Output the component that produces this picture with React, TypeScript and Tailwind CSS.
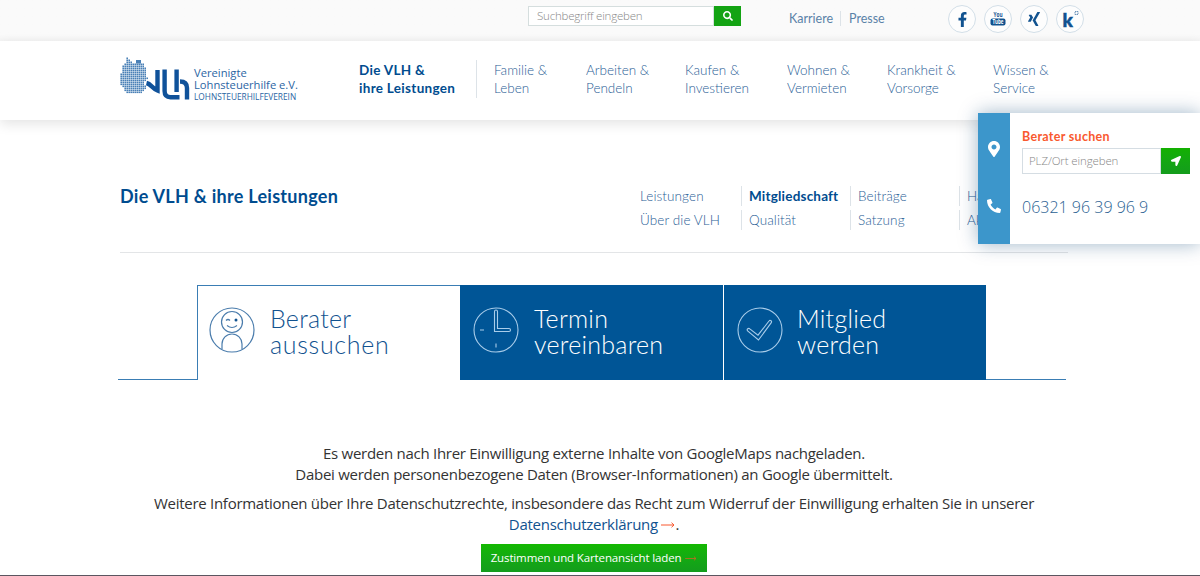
import { FaFacebookF, FaLocationArrow, FaMapMarkerAlt, FaPhone, FaSearch, FaXing } from "react-icons/fa";

const mainNav = [
  { lines: ["Familie &", "Leben"], width: "w-[92px]" },
  { lines: ["Arbeiten &", "Pendeln"], width: "w-[99px]" },
  { lines: ["Kaufen &", "Investieren"], width: "w-[102px]" },
  { lines: ["Wohnen &", "Vermieten"], width: "w-[100px]" },
  { lines: ["Krankheit &", "Vorsorge"], width: "w-[106px]" },
  { lines: ["Wissen &", "Service"], width: "w-[80px]" },
];

const subNav = [
  ["Leistungen", "Über die VLH"],
  ["Mitgliedschaft", "Qualität"],
  ["Beiträge", "Satzung"],
  ["Häufige Fragen", "Aktuelles"],
];

// dotted map: first and last column of every row
const mapRows = [
  [3, 3], [3, 4], [3, 5], [2, 11], [1, 11], [1, 12], [1, 12], [1, 12], [0, 12],
  [0, 12], [0, 13], [0, 12], [0, 11], [0, 11], [1, 12], [2, 12], [2, 11], [3, 10],
];

function Logo() {
  return (
    <div className="flex w-[239px] shrink-0">
      <svg width="72" height="46" viewBox="0 0 72 46" className="shrink-0">
        <g fill="#4a80b6">
          <rect x="16" y="3" width="5" height="3.5" />
          {mapRows.map(([from, to], row) =>
            Array.from({ length: to - from + 1 }, (_, i) => (
              <rect key={`${row}-${i}`} x={(from + i) * 2 + 0.4} y={row * 2 + 0.5} width="1.6" height="1.6" />
            ))
          )}
        </g>
        <g fill="none" stroke="#10529a" strokeWidth="4.4">
          <path d="M26.500 26C31 27 32.500 31.500 37.500 33.500V13" />
          <path d="M44.600 12.500V34Q44.600 40.200 50.500 40.200H59.500" />
          <path d="M56.600 12.500V35M60 24.500Q67 24.500 67 31V42.500" />
        </g>
      </svg>
      <div className="pt-[10px] pl-[2px] font-['Open_Sans',sans-serif] text-[#2b65a3] whitespace-nowrap">
        <p className="text-[11.200px] leading-[12px]">Vereinigte</p>
        <p className="text-[11.200px] leading-[12px]">Lohnsteuerhilfe e.V.</p>
        <p className="text-[8.300px] leading-[11px]">LOHNSTEUERHILFEVEREIN</p>
      </div>
    </div>
  );
}

function YoutubeIcon() {
  return (
    <svg width="18" height="20" viewBox="-1 -2 18 20" className="overflow-visible">
      <text x="8" y="6.200" textAnchor="middle" fontSize="7" fontWeight="700" fontFamily="Open Sans" fill="#11528f" textLength="9" lengthAdjust="spacingAndGlyphs">You</text>
      <rect x="0.500" y="7.500" width="15" height="7" rx="2" fill="#11528f" />
      <text x="8" y="13.400" textAnchor="middle" fontSize="6.500" fontWeight="700" fontFamily="Open Sans" fill="#fff" textLength="11" lengthAdjust="spacingAndGlyphs">Tube</text>
    </svg>
  );
}

function KununuIcon() {
  return (
    <svg width="20" height="26" viewBox="0 -3 20 26" className="overflow-visible">
      <text x="2.500" y="17.500" fontSize="19" fontWeight="900" fontFamily="Lato" fill="#11528f" stroke="#11528f" strokeWidth="0.500">k</text>
      <rect x="15" y="2.500" width="3" height="3" fill="none" stroke="#6d94ba" strokeDasharray="1.500 0.500" />
    </svg>
  );
}

function Arrow({ className }: { className: string }) {
  return (
    <svg viewBox="0 0 14 6" fill="none" stroke="currentColor" strokeWidth="1" className={`inline-block ${className}`}>
      <path d="M0 3H13M10.500 0.700L13 3L10.500 5.300" />
    </svg>
  );
}

function TopBar() {
  const circle = "flex size-7 items-center justify-center rounded-full border border-[#d3dfe8] bg-[#fdfdfd] text-[#11528f]";
  return (
    <div className="flex h-[41px] shrink-0 bg-linear-to-b from-[#fafafa] from-85% to-[#f5f5f5] pl-[528px]">
      <div className="mt-1.5 flex h-5">
        <div className="flex w-[186px] items-center border border-[#d5dede] bg-white pl-2 font-['Open_Sans',sans-serif] text-[11.500px] font-light tracking-[-0.200px] text-[#888]">
          Suchbegriff eingeben
        </div>
        <button className="flex w-[27px] items-center justify-center bg-[#13a313] text-white">
          <FaSearch size={10} />
        </button>
      </div>
      <div className="mt-[11px] ml-12 flex h-[15px] w-[159px] text-[12.500px] leading-[15px] text-[#5a82a8]">
        <a className="w-[52px] border-r border-[#dde3e8]">Karriere</a>
        <a className="pl-2">Presse</a>
      </div>
      <div className="mt-[5px] flex gap-2">
        <a className={circle}><FaFacebookF size={15} /></a>
        <a className={circle}><YoutubeIcon /></a>
        <a className={circle}><FaXing size={16} /></a>
        <a className={circle}><KununuIcon /></a>
      </div>
    </div>
  );
}

function AdvisorPanel() {
  return (
    <aside className="absolute top-[113px] right-0 flex h-[131px] w-[222px] bg-white shadow-[0_0_18px_rgba(0,60,110,0.38)]">
      <div className="flex w-8 flex-col items-center bg-[#3c96cb] pt-[28px] text-white">
        <FaMapMarkerAlt size={16} />
        <FaPhone size={14} className="mt-[42px] -scale-x-100" />
      </div>
      <div className="pt-[15px] pl-3">
        <p className="text-[12.500px] leading-[18px] font-bold tracking-[0.300px] text-[#f9592f]">Berater suchen</p>
        <div className="mt-[2px] flex h-[26px] w-[168px]">
          <div className="flex flex-1 items-center border border-[#d5dde3] pl-1.5 font-['Open_Sans',sans-serif] text-[11.500px] font-light tracking-[-0.120px] text-[#888]">
            PLZ/Ort eingeben
          </div>
          <button className="flex w-[29px] items-center justify-center bg-linear-to-b from-[#13b000] to-[#149c1c] text-white">
            <FaLocationArrow size={10} />
          </button>
        </div>
        <p className="mt-[21px] font-['Open_Sans',sans-serif] text-[16px] leading-6 font-light whitespace-nowrap text-[#2a5f92]">
          06321 96 39 96 9
        </p>
      </div>
    </aside>
  );
}

function AdvisorIcon() {
  return (
    <svg width="46" height="46" viewBox="0 0 46 46" fill="none" stroke="#4a7cac" strokeWidth="1.2">
      <circle cx="23" cy="23" r="22" />
      <circle cx="23" cy="15" r="10.500" />
      <path d="M13 42V37a10 10 0 0 1 20 0v5M18 18.500q5 4 10 0M17 13.500q2-2 4 0" />
      <circle cx="27" cy="13" r="1.500" fill="#11528f" stroke="none" />
    </svg>
  );
}

function ClockIcon() {
  return (
    <svg width="46" height="46" viewBox="0 0 46 46" fill="none" stroke="#a9cdea" strokeWidth="1.1">
      <circle cx="23" cy="23" r="22" />
      <path d="M21.500 24.500V4.500q0-1.500 1.500-1.500t1.500 1.500V21.500H36q1.500 0 1.500 1.500t-1.500 1.500ZM7 23h4M23 36.500v4" />
    </svg>
  );
}

function CheckIcon() {
  return (
    <svg width="46" height="46" viewBox="0 0 46 46" fill="none" stroke="#a9cdea" strokeWidth="1.1">
      <circle cx="23" cy="23" r="22" />
      <path d="M10.600 23.800a1.400 1.400 0 0 1 2.200-1.900L21 28.200L32 14a1.400 1.400 0 0 1 2.300 1.700L21.500 33Z" />
    </svg>
  );
}

export default function App() {
  return (
    <div className="relative flex h-[576px] w-[1200px] flex-col overflow-hidden border-b border-[#5b5660] bg-white font-[Lato,sans-serif]">
      <TopBar />

      {/* Main navigation */}
      <header className="flex h-[79px] shrink-0 bg-white pt-[16px] pl-[120px] shadow-[0_4px_12px_rgba(0,0,0,0.11)]">
        <Logo />
        <nav className="mt-[3px] flex h-[38px] text-[13.500px] leading-[18px] font-light whitespace-nowrap text-[#2a6096]">
          <a className="mr-[17px] w-[118px] border-r border-[#dde3e8] pt-px font-bold tracking-[0.300px] text-[#004c8f]">
            Die VLH &amp;<br />ihre Leistungen
          </a>
          {mainNav.map(({ lines, width }) => (
            <a key={lines[0]} className={`${width} pt-px`}>
              {lines[0]}<br />{lines[1]}
            </a>
          ))}
        </nav>
      </header>

      {/* Section navigation */}
      <section className="mx-[120px] flex h-[133px] w-[948px] shrink-0 border-b border-[#e3e5e7] pt-[64px]">
        <h1 className="w-[512px] text-[18px] leading-6 font-bold tracking-[0.280px] text-[#004c8f]">Die VLH &amp; ihre Leistungen</h1>
        <div className="flex pt-[2px] text-[13.500px] font-light whitespace-nowrap text-[#2a6096]">
          {subNav.map((column, i) => (
            <div key={column[0]} className="flex w-[109px] flex-col gap-1">
              {column.map((label) => (
                <a
                  key={label}
                  className={`h-5 leading-5 ${i > 0 ? "border-l border-[#dde3e8] pl-[7px]" : "pl-2"} ${label === "Mitgliedschaft" ? "font-bold tracking-[0.200px] text-[#004c8f]" : "tracking-[0.100px]"}`}
                >
                  {label}
                </a>
              ))}
            </div>
          ))}
        </div>
      </section>

      {/* Tabs */}
      <div className="mt-8 ml-[118px] flex h-[95px] w-[948px] shrink-0 text-[25px] leading-[26px] font-light tracking-[0.250px]">
        <div className="w-[79px] border-b border-[#3a7db4]" />
        <div className="flex w-[263px] gap-[15px] border-t border-l border-[#3a7db4] pt-[21px] pl-[11px] text-[#11528f]">
          <AdvisorIcon />
          <p className="-mt-[2px]">Berater<br /><span className="tracking-[0.700px]">aussuchen</span></p>
        </div>
        <div className="flex w-[263px] gap-[15px] bg-[#005596] pt-[22px] pl-[13px] text-white">
          <ClockIcon />
          <p className="-mt-[2px]">Termin<br />vereinbaren</p>
        </div>
        <div className="ml-px flex w-[262px] gap-[14px] bg-[#005596] pt-[22px] pl-[13px] text-white">
          <CheckIcon />
          <p className="-mt-[2px]">Mitglied<br />werden</p>
        </div>
        <div className="flex-1 border-b border-[#3a7db4]" />
      </div>

      {/* Consent notice */}
      <div className="mt-[63px] flex w-[1188px] flex-col items-center gap-[9px] text-center font-['Open_Sans',sans-serif] text-[15px] leading-[20.500px] tracking-[-0.275px] whitespace-nowrap text-[#333]">
        <p>
          Es werden nach Ihrer Einwilligung externe Inhalte von GoogleMaps nachgeladen.<br />
          Dabei werden personenbezogene Daten (Browser-Informationen) an Google übermittelt.
        </p>
        <p>
          Weitere Informationen über Ihre Datenschutzrechte, insbesondere das Recht zum Widerruf der Einwilligung erhalten Sie in unserer<br />
          <a className="text-[#11528f]">Datenschutzerklärung</a> <Arrow className="h-[6px] w-[14px] align-[2px] text-[#f9592f]" />.
        </p>
        <button className="mt-px h-[28px] w-[226px] bg-linear-to-b from-[#13b800] to-[#149c1c] text-[11.500px] leading-[26px] tracking-[-0.130px] text-white">
          Zustimmen und Kartenansicht laden <Arrow className="ml-px h-[5px] w-[12px] align-[1.500px] text-[#c06a20]" />
        </button>
      </div>

      <AdvisorPanel />
    </div>
  );
}
